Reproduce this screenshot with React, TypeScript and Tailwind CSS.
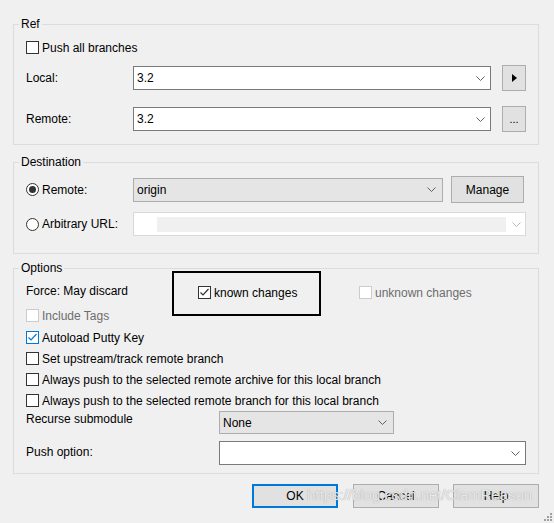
import React from "react";

const Chevron = ({ light }: { light?: boolean }) => (
    <svg width="9" height="5" viewBox="0 0 9 5" className="shrink-0">
        <polyline
            points="0.5,0.5 4.5,4.5 8.5,0.5"
            fill="none"
            stroke={light ? "#b5b5b5" : "#606060"}
            strokeWidth="1"
        />
    </svg>
);

const Check = ({ color }: { color: string }) => (
    <svg width="11" height="11" viewBox="0 0 11 11">
        <polyline points="1.5,5.5 4,8 9.5,2" fill="none" stroke={color} strokeWidth="1.2" />
    </svg>
);

const CheckBox = ({
    label,
    checked,
    disabled,
    blue,
}: {
    label: string;
    checked?: boolean;
    disabled?: boolean;
    blue?: boolean;
}) => (
    <div className="flex items-center h-[13px]">
        <span
            className={
                "w-[13px] h-[13px] flex items-center justify-center bg-white border " +
                (disabled ? "border-[#cccccc]" : blue ? "border-[#0078d7]" : "border-[#333333]")
            }
        >
            {checked && <Check color={blue ? "#0078d7" : "#333333"} />}
        </span>
        <span className={"ml-[3px] whitespace-nowrap " + (disabled ? "text-[#6d6d6d]" : "")}>
            {label}
        </span>
    </div>
);

const Radio = ({ label, checked }: { label: string; checked?: boolean }) => (
    <div className="flex items-center">
        <span className="w-[13px] h-[13px] rounded-full border border-[#333333] bg-white flex items-center justify-center">
            {checked && <span className="w-[7px] h-[7px] rounded-full bg-[#333333]" />}
        </span>
        <span className="ml-[3px] whitespace-nowrap">{label}</span>
    </div>
);

const Legend = ({ children }: { children: string }) => (
    <legend className="-ml-[7px] px-[2px] leading-[16px]">{children}</legend>
);

export default function App() {
    return (
        <div className="relative w-[554px] h-[523px] overflow-hidden bg-[#f0f0f0] px-[13px] pt-[16px] text-[12px] text-black font-['Liberation_Sans',Arial,sans-serif]">
            {/* Ref */}
            <fieldset className="w-[526px] border border-[#dcdcdc] px-[12px] pb-[12px]">
                <Legend>Ref</Legend>
                <div className="mt-[9px]">
                    <CheckBox label="Push all branches" />
                </div>
                <div className="mt-[11px] h-[26px] flex items-center">
                    <span className="w-[107px]">Local:</span>
                    <div className="w-[358px] h-[24px] bg-white border border-[#7a7a7a] pl-[3px] pr-[5px] flex items-center justify-between">
                        <span>3.2</span>
                        <Chevron />
                    </div>
                    <button className="ml-[11px] w-[24px] h-[26px] bg-[#e1e1e1] border border-[#adadad] flex items-center justify-center">
                        <svg width="5" height="8" viewBox="0 0 5 8">
                            <polygon points="0,0 5,4 0,8" fill="#000" />
                        </svg>
                    </button>
                </div>
                <div className="mt-[15px] h-[26px] flex items-center">
                    <span className="w-[107px]">Remote:</span>
                    <div className="w-[358px] h-[24px] bg-white border border-[#7a7a7a] pl-[3px] pr-[5px] flex items-center justify-between">
                        <span>3.2</span>
                        <Chevron />
                    </div>
                    <button className="ml-[11px] w-[24px] h-[26px] bg-[#e1e1e1] border border-[#adadad] text-[11px] leading-[20px]">
                        ...
                    </button>
                </div>
            </fieldset>

            {/* Destination */}
            <fieldset className="mt-[9px] w-[526px] border border-[#dcdcdc] px-[12px] pb-[17px]">
                <Legend>Destination</Legend>
                <div className="mt-[6px] h-[27px] flex items-center">
                    <div className="w-[107px]">
                        <Radio label="Remote:" checked />
                    </div>
                    <div className="w-[310px] h-[24px] bg-[#e5e5e5] border border-[#adadad] pl-[3px] pr-[6px] flex items-center justify-between">
                        <span>origin</span>
                        <Chevron />
                    </div>
                    <button className="ml-[8px] w-[73px] h-[27px] bg-[#e1e1e1] border border-[#adadad]">
                        Manage
                    </button>
                </div>
                <div className="mt-[9px] h-[24px] flex items-center">
                    <div className="w-[107px]">
                        <Radio label="Arbitrary URL:" />
                    </div>
                    <div className="w-[393px] h-[24px] bg-white border border-[#d9d9d9] pl-[23px] pr-[4px] flex items-center">
                        <span className="w-[349px] h-[15px] bg-[#f0f0f0]" />
                        <span className="ml-auto">
                            <Chevron light />
                        </span>
                    </div>
                </div>
            </fieldset>

            {/* Options */}
            <fieldset className="mt-[6px] w-[526px] border border-[#dcdcdc] px-[12px] pb-[8px]">
                <Legend>Options</Legend>
                <div className="mt-[10px] h-[13px] flex items-center">
                    <span className="w-[172px] whitespace-nowrap -mt-[3px]">Force: May discard</span>
                    <div className="w-[161px]">
                        <CheckBox label="known changes" checked />
                    </div>
                    <CheckBox label="unknown changes" disabled />
                </div>
                <div className="mt-[10px]">
                    <CheckBox label="Include Tags" disabled />
                </div>
                <div className="mt-[9px]">
                    <CheckBox label="Autoload Putty Key" checked blue />
                </div>
                <div className="mt-[8px]">
                    <CheckBox label="Set upstream/track remote branch" />
                </div>
                <div className="mt-[8px]">
                    <CheckBox label="Always push to the selected remote archive for this local branch" />
                </div>
                <div className="mt-[8px]">
                    <CheckBox label="Always push to the selected remote branch for this local branch" />
                </div>
                <div className="mt-[4px] flex items-start">
                    <span className="w-[193px] leading-[16px]">Recurse submodule</span>
                    <div className="w-[175px] h-[23px] bg-[#e5e5e5] border border-[#adadad] pl-[3px] pr-[6px] flex items-center justify-between">
                        <span>None</span>
                        <Chevron />
                    </div>
                </div>
                <div className="mt-[7px] h-[24px] flex items-center">
                    <span className="w-[193px] -mt-[3px]">Push option:</span>
                    <div className="w-[307px] h-[24px] bg-white border border-[#7a7a7a] pr-[5px] flex items-center justify-end">
                        <Chevron />
                    </div>
                </div>
            </fieldset>

            {/* Buttons */}
            <div className="mt-[10px] w-[526px] flex justify-end">
                <button className="w-[86px] h-[24px] bg-[#e1e1e1] border-2 border-[#0078d7]">OK</button>
                <button className="ml-[15px] w-[86px] h-[24px] bg-[#e1e1e1] border border-[#adadad]">
                    Cancel
                </button>
                <button className="ml-[14px] w-[86px] h-[24px] bg-[#e1e1e1] border border-[#adadad]">
                    Help
                </button>
            </div>

            {/* annotation box */}
            <div className="absolute left-[172px] top-[271px] w-[149px] h-[45px] border-2 border-black" />

            {/* watermark */}
            <div className="absolute left-[307px] top-[485px] text-[15px] leading-[20px] whitespace-nowrap text-[rgba(255,255,255,0.8)] [text-shadow:0_0_1px_#8a8a8a]">
                https://blog.csdn.net/ClamReason
            </div>

            {/* resize grip */}
            <svg className="absolute right-[1px] bottom-[1px]" width="10" height="10" viewBox="0 0 10 10">
                <rect x="7" y="1" width="2" height="2" fill="#a0a0a0" />
                <rect x="4" y="4" width="2" height="2" fill="#a0a0a0" />
                <rect x="7" y="4" width="2" height="2" fill="#a0a0a0" />
                <rect x="1" y="7" width="2" height="2" fill="#a0a0a0" />
                <rect x="4" y="7" width="2" height="2" fill="#a0a0a0" />
                <rect x="7" y="7" width="2" height="2" fill="#a0a0a0" />
            </svg>
        </div>
    );
}
